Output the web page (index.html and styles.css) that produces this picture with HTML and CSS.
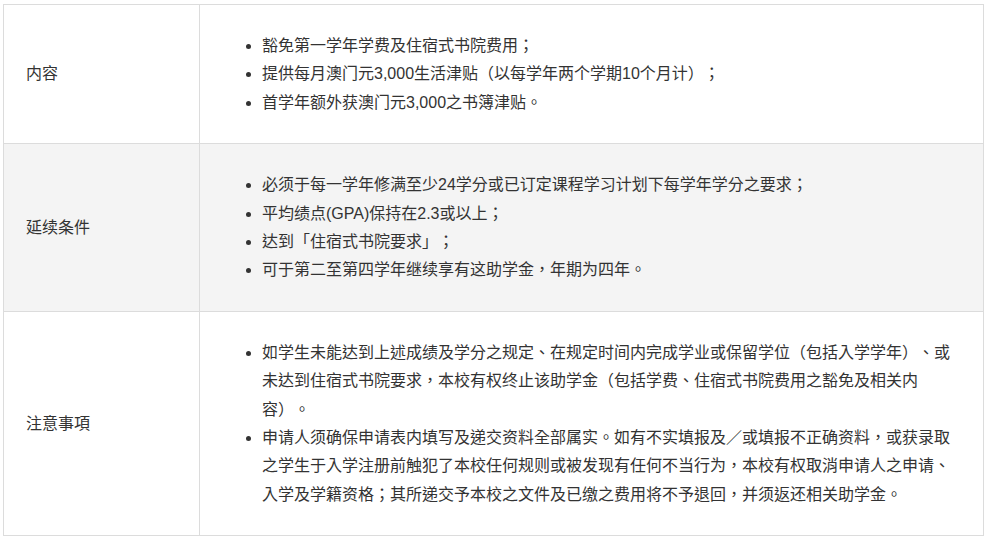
FILE: index.html
```html
<!DOCTYPE html>
<html lang="zh-Hant">
<head>
<meta charset="utf-8">
<link rel="stylesheet" href="styles.css">
</head>
<body>
<table class="info">
  <tr>
    <td class="label">内容</td>
    <td class="body">
      <ul>
        <li>豁免第一学年学费及住宿式书院费用；</li>
        <li>提供每月澳门元3,000生活津贴（以每学年两个学期10个月计）；</li>
        <li>首学年额外获澳门元3,000之书簿津贴。</li>
      </ul>
    </td>
  </tr>
  <tr class="alt">
    <td class="label">延续条件</td>
    <td class="body">
      <ul>
        <li>必须于每一学年修满至少24学分或已订定课程学习计划下每学年学分之要求；</li>
        <li>平均绩点(GPA)保持在2.3或以上；</li>
        <li>达到「住宿式书院要求」；</li>
        <li>可于第二至第四学年继续享有这助学金，年期为四年。</li>
      </ul>
    </td>
  </tr>
  <tr>
    <td class="label">注意事項</td>
    <td class="body">
      <ul>
        <li>如学生未能达到上述成绩及学分之规定、在规定时间内完成学业或保留学位（包括入学学年）、或未达到住宿式书院要求，本校有权终止该助学金（包括学费、住宿式书院费用之豁免及相关内容）。</li>
        <li>申请人须确保申请表内填写及递交资料全部属实。如有不实填报及／或填报不正确资料，或获录取之学生于入学注册前触犯了本校任何规则或被发现有任何不当行为，本校有权取消申请人之申请、入学及学籍资格；其所递交予本校之文件及已缴之费用将不予退回，并须返还相关助学金。</li>
      </ul>
    </td>
  </tr>
</table>
</body>
</html>
```
FILE: styles.css
```css
html, body {
  margin: 0;
  padding: 0;
  background: #fff;
}
body {
  font-family: "Liberation Sans", "Noto Sans CJK TC", sans-serif;
  font-size: 16px;
  color: #333;
  text-spacing-trim: space-all;
}
.info {
  border-collapse: collapse;
  width: 981px;
  margin: 4px 0 0 3px;
  table-layout: fixed;
}
.info td {
  border: 1px solid #dcdcdc;
  padding: 11px 22px 10px;
  vertical-align: middle;
  line-height: 28.4px;
}
.info td.label {
  width: 151px;
}
.info tr.alt td {
  background: #f4f4f4;
}
.info ul {
  margin: 16px 0;
  padding-left: 40px;
  list-style: disc;
}
```
